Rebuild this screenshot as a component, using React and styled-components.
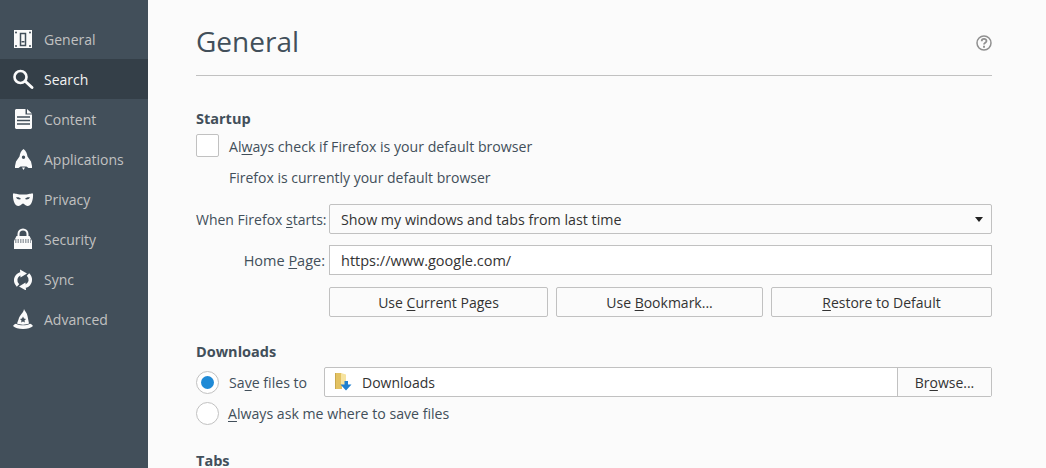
import React from "react";
import styled, { createGlobalStyle } from "styled-components";

const Global = createGlobalStyle`
  html, body { margin: 0; padding: 0; height: 100%; overflow: hidden; background: #fbfbfb; }
  #root { height: 100%; }
  * { box-sizing: border-box; }
`;

const FONT = `"Open Sans", "Noto Sans", "Liberation Sans", sans-serif`;

const GeneralIcon = () => (
  <svg width="24" height="22" viewBox="0 0 24 22">
    <path fill="#fbfbfb" d="M2 2h18v18H2z" />
    <path fill="none" stroke="#424f5a" strokeWidth="1.500" d="M8.500 5.500h5v12h-5z" />
    <path fill="#424f5a" d="M9.500 13h3v1.500h-3z" />
    <circle cx="4" cy="4.500" r="1" fill="#424f5a" />
    <circle cx="18" cy="4.500" r="1" fill="#424f5a" />
    <circle cx="4" cy="18" r="1" fill="#424f5a" />
    <circle cx="18" cy="18" r="1" fill="#424f5a" />
  </svg>
);

const SearchIcon = () => (
  <svg width="24" height="22" viewBox="0 0 24 22" fill="none" stroke="#fbfbfb">
    <circle cx="8.500" cy="9" r="6" strokeWidth="2.600" />
    <path d="M13.500 13.500l6.500 6" strokeWidth="3" strokeLinecap="round" />
  </svg>
);

const ContentIcon = () => (
  <svg width="24" height="22" viewBox="0 0 24 22">
    <path fill="#fbfbfb" d="M4 1h9.500v5.500H20V20l-1 1H4l-1-1V2zM15 1l5 4.500h-5z" />
    <path stroke="#424f5a" strokeWidth="1.300" d="M5 9h13M5 12.500h13M5 16h13" />
  </svg>
);

const ApplicationsIcon = () => (
  <svg width="24" height="22" viewBox="0 0 24 22">
    <path fill="#fbfbfb" fillRule="evenodd" d="M11.500 1c2.500 1.800 3.500 4.500 4 7.500l3.500 5 1 4.500v2h-3.500l-2-1.500h-6L6.500 20H3v-2l1-4.500 3.500-5c.5-3 1.500-5.700 4-7.500zM11.500 7.500a1.700 1.700 0 1 0 0 3.400 1.700 1.700 0 0 0 0-3.400z" />
    <path fill="#fbfbfb" d="M10 19.500h3L11.500 22z" />
  </svg>
);

const PrivacyIcon = () => (
  <svg width="24" height="22" viewBox="0 0 24 22">
    <path fill="#fbfbfb" fillRule="evenodd" d="M1 5.500c2.500-.5 3.500 1 10 1s7.500-1.500 10-1c.5 6-1.500 12.500-5.500 12.500-2.500 0-3-2.500-4.500-2.500S9 18 6.500 18C2.500 18 .5 11.500 1 5.500zM4 9.500c1 2 3.500 2.500 5 1.500-1-1.500-3-2-5-1.500zM18 9.500c-2-.5-4 0-5 1.500 1.500 1 4 .5 5-1.500z" />
  </svg>
);

const SecurityIcon = () => (
  <svg width="24" height="22" viewBox="0 0 24 22">
    <path fill="none" stroke="#fbfbfb" strokeWidth="2" d="M6.500 8V6a4.500 4.500 0 0 1 9 0v2" />
    <path fill="#fbfbfb" d="M4.500 8h13L20 13v8H2v-8z" />
    <path fill="none" stroke="#424f5a" strokeWidth="1.200" strokeDasharray="1.500 1" d="M3 12h16M3 14h16" />
  </svg>
);

const SyncIcon = () => (
  <svg width="24" height="22" viewBox="0 0 24 22" fill="none" stroke="#fbfbfb" strokeWidth="3.400">
    <path d="M6 17.500C2.500 14 2.500 8 9 5.500" />
    <path d="M16 6.500c3.500 3.500 3.500 9.500-3 12" />
    <path fill="#fbfbfb" stroke="none" d="M8 1.500l7 4-6.500 4zM14 22.500l-7-4 6.500-4z" />
  </svg>
);

const AdvancedIcon = () => (
  <svg width="24" height="22" viewBox="0 0 24 22">
    <path fill="#fbfbfb" fillRule="evenodd" d="M12 1c.5 2 3 3.500 3.500 7l1.500 7.500c-3 1.500-9 1.500-12 0l1.500-4C7.500 7 11.500 5 12 1zM11 8.500l-1 2-2 .4 1.500 1.500-.4 2 1.900-1 1.900 1-.4-2 1.500-1.500-2-.4z" />
    <path fill="#fbfbfb" d="M1 18c.8-1.200 1.800-1.900 3-2.200 4 2 10 2 14 0 1.200.3 2.200 1 3 2.200-2 2-5.500 3-10 3S3 20 1 18z" />
  </svg>
);

const FolderIcon = () => (
  <svg width="17" height="18" viewBox="0 0 17 18">
    <path fill="#e3c262" d="M0 0h6l1 1v15H0z" />
    <path fill="#f6e3a0" d="M6 0l5 1.500V12H6z" />
    <path fill="#c9a94f" d="M0 0h1v16H0z" />
    <path fill="#1f80d0" d="M9.500 8h3.500v3.500h3.500l-5.500 6-5.500-6h4z" />
  </svg>
);

const HelpIcon = () => (
  <svg width="16" height="16" viewBox="0 0 16 16" fill="none" stroke="#8f8f8f">
    <circle cx="8" cy="8" r="7" strokeWidth="1.500" />
    <path d="M5.700 6.200c0-3 4.800-3 4.800-.2 0 1.800-2.500 1.800-2.500 3.500" strokeWidth="1.800" />
    <path d="M8 10.800v1.900" strokeWidth="1.900" />
  </svg>
);

const NAV = [
  { label: "General", Icon: GeneralIcon },
  { label: "Search", Icon: SearchIcon, active: true },
  { label: "Content", Icon: ContentIcon },
  { label: "Applications", Icon: ApplicationsIcon },
  { label: "Privacy", Icon: PrivacyIcon },
  { label: "Security", Icon: SecurityIcon },
  { label: "Sync", Icon: SyncIcon },
  { label: "Advanced", Icon: AdvancedIcon },
];

export default function App() {
  return (
    <Page>
      <Global />
      <Sidebar>
        {NAV.map(({ label, Icon, active }) => (
          <NavItem key={label} $active={active}>
            <NavIcon><Icon /></NavIcon>
            {label}
          </NavItem>
        ))}
      </Sidebar>
      <Main>
        <Header>
          <Title>General</Title>
          <HelpWrap><HelpIcon /></HelpWrap>
        </Header>

        <SectionTitle>Startup</SectionTitle>
        <OptionRow>
          <Checkbox />
          <OptionText>Al<u>w</u>ays check if Firefox is your default browser</OptionText>
        </OptionRow>
        <Note>Firefox is currently your default browser</Note>

        <FormGrid>
          <Label>When Firefox <u>s</u>tarts:</Label>
          <Select>
            <span>Show my windows and tabs from last time</span>
            <Caret />
          </Select>
          <HomeLabel>Home <u>P</u>age:</HomeLabel>
          <Input>https://www.google.com/</Input>
          <ButtonRow>
            <Button $width={219}><span>Use <u>C</u>urrent Pages</span></Button>
            <Button $width={207}><span>Use <u>B</u>ookmark...</span></Button>
            <Button $width={221}><span><u>R</u>estore to Default</span></Button>
          </ButtonRow>
        </FormGrid>

        <DownloadsTitle>Downloads</DownloadsTitle>
        <SaveRow>
          <Radio $checked />
          <SaveLabel>Sa<u>v</u>e files to</SaveLabel>
          <PathField>
            <PathValue><FolderIcon /><span>Downloads</span></PathValue>
            <Browse><span>Br<u>o</u>wse...</span></Browse>
          </PathField>
        </SaveRow>
        <AskRow>
          <Radio />
          <AskText><u>A</u>lways ask me where to save files</AskText>
        </AskRow>

        <TabsTitle>Tabs</TabsTitle>
      </Main>
    </Page>
  );
}

const Page = styled.div`
  display: flex;
  width: 1046px;
  height: 468px;
  overflow: hidden;
  font-family: ${FONT};
  font-size: 14px;
  color: #424f5a;
  background: #fbfbfb;
  u { text-underline-offset: 2px; text-decoration-thickness: 1px; }
`;

const Sidebar = styled.nav`
  width: 148px;
  flex: none;
  padding-top: 19px;
  background: #424f5a;
`;

const NavItem = styled.div`
  display: flex;
  align-items: center;
  height: 40px;
  padding-left: 12px;
  font-size: 14px;
  color: ${(p) => (p.$active ? "#f2f2f2" : "#c1c1c1")};
  background: ${(p) => (p.$active ? "#343f48" : "transparent")};
`;

const NavIcon = styled.span`
  display: flex;
  width: 32px;
  flex: none;
`;

const Main = styled.main`
  width: 796px;
  margin-left: 48px;
  flex: none;
`;

const Header = styled.header`
  display: flex;
  align-items: center;
  justify-content: space-between;
  height: 76px;
  padding-top: 7px;
  border-bottom: 1px solid #c1c1c1;
`;

const Title = styled.h1`
  margin: 0;
  font-size: 28px;
  font-weight: 400;
  line-height: 36px;
`;

const HelpWrap = styled.span`
  display: flex;
  margin-top: 3px;
`;

const SectionTitle = styled.h2`
  margin: 33px 0 0;
  font-size: 14.500px;
  font-weight: 700;
  line-height: 20px;
`;

const OptionRow = styled.div`
  display: flex;
  align-items: center;
  gap: 10px;
  height: 23px;
  margin-top: 5px;
`;

const OptionText = styled.span`
  padding-top: 2px;
  font-size: 14.150px;
`;

const AskText = styled(OptionText)`
  padding-top: 0;
  margin-left: -1px;
`;

const Checkbox = styled.span`
  width: 23px;
  height: 23px;
  flex: none;
  border: 1px solid #c1c1c1;
  border-radius: 2px;
  background: #fff;
`;

const Note = styled.div`
  margin: 11px 0 0 33px;
  line-height: 20px;
`;

const FormGrid = styled.div`
  display: grid;
  grid-template-columns: 129px 663px;
  column-gap: 4px;
  row-gap: 11px;
  align-items: center;
  margin-top: 16px;
`;

const Label = styled.span`
  text-align: right;
  white-space: nowrap;
`;

const HomeLabel = styled(Label)`
  font-size: 14.500px;
`;

const Select = styled.div`
  display: flex;
  align-items: center;
  justify-content: space-between;
  height: 30px;
  padding: 0 11px;
  border: 1px solid #c1c1c1;
  border-radius: 2px;
  background: #fbfbfb;
  font-size: 14.250px;
  color: #333;
`;

const Caret = styled.span`
  width: 0;
  height: 0;
  margin-right: -3px;
  border-left: 4.500px solid transparent;
  border-right: 4.500px solid transparent;
  border-top: 5px solid #222;
`;

const Input = styled.div`
  display: flex;
  align-items: center;
  height: 30px;
  padding: 0 11px;
  border: 1px solid #c1c1c1;
  background: #fff;
  font-size: 14.500px;
  color: #333;
`;

const ButtonRow = styled.div`
  display: flex;
  gap: 8px;
  grid-column: 2;
  margin-top: 1px;
`;

const Button = styled.div`
  display: flex;
  align-items: center;
  justify-content: center;
  width: ${(p) => p.$width}px;
  height: 30px;
  border: 1px solid #c1c1c1;
  border-radius: 2px;
  background: #fbfbfb;
  color: #333;
`;

const DownloadsTitle = styled(SectionTitle)`
  margin-top: 25px;
`;

const SaveRow = styled.div`
  display: flex;
  align-items: center;
  height: 30px;
  margin-top: 5px;
`;

const Radio = styled.span`
  position: relative;
  width: 23px;
  height: 23px;
  flex: none;
  border: 1px solid #c1c1c1;
  border-radius: 50%;
  background: #fff;
  &::after {
    content: "";
    display: ${(p) => (p.$checked ? "block" : "none")};
    position: absolute;
    inset: 4px;
    border-radius: 50%;
    background: #1f8ad6;
  }
`;

const SaveLabel = styled.span`
  width: 105px;
  flex: none;
  padding-left: 10px;
  font-size: 14.150px;
`;

const PathField = styled.div`
  display: flex;
  flex: 1;
  height: 30px;
  border: 1px solid #c1c1c1;
  border-radius: 2px;
  background: #fff;
`;

const PathValue = styled.div`
  display: flex;
  align-items: center;
  flex: 1;
  gap: 10px;
  padding-left: 10px;
  color: #333;
`;

const Browse = styled.div`
  display: flex;
  align-items: center;
  justify-content: center;
  width: 94px;
  border-left: 1px solid #c1c1c1;
  background: #fbfbfb;
  color: #333;
`;

const AskRow = styled(OptionRow)`
  margin-top: 5px;
`;

const TabsTitle = styled(SectionTitle)`
  margin-top: 29px;
  line-height: 14px;
`;
